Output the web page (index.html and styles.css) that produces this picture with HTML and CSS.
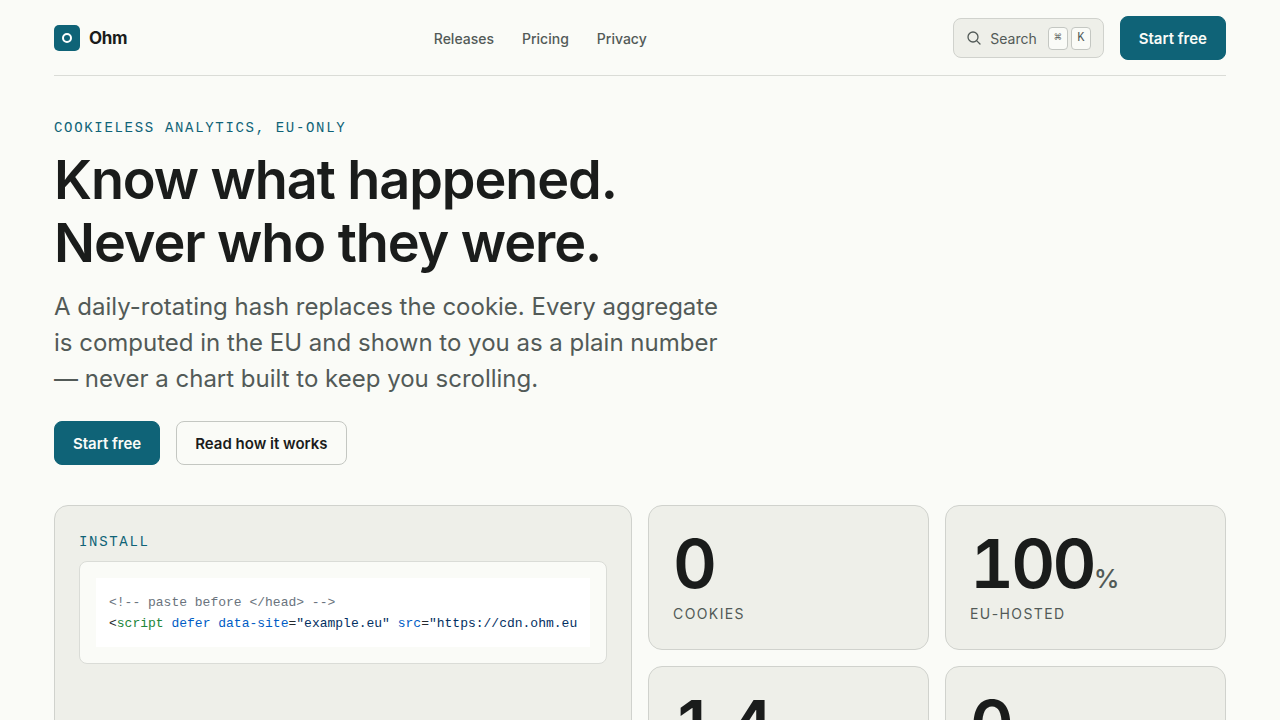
FILE: index.html
```html
<!DOCTYPE html>
<html lang="en">
<head>
    <meta charset="UTF-8">
    <meta name="viewport" content="width=device-width, initial-scale=1.0">
    <title>Ohm</title>
    <link rel="stylesheet" href="styles.css">
</head>
<body>
    <div class="page">
        <header class="topbar">
            <a class="brand" href="#">
                <svg class="brand-mark" viewBox="0 0 26 26" aria-hidden="true">
                    <rect width="26" height="26" rx="5" fill="#0f6377"/>
                    <circle cx="13" cy="13" r="4" fill="none" stroke="#fff" stroke-width="2"/>
                </svg>
                <span>Ohm</span>
            </a>

            <nav class="nav">
                <a href="#">Releases</a>
                <a href="#">Pricing</a>
                <a href="#">Privacy</a>
            </nav>

            <div class="actions">
                <button type="button" class="search">
                    <svg class="search-icon" viewBox="0 0 16 16" aria-hidden="true">
                        <circle cx="7" cy="7" r="5" fill="none" stroke="currentColor" stroke-width="1.3"/>
                        <path d="M10.6 10.6 L14 14" stroke="currentColor" stroke-width="1.3" stroke-linecap="round"/>
                    </svg>
                    <span>Search</span>
                    <span class="keys"><kbd>⌘</kbd><kbd>K</kbd></span>
                </button>
                <button type="button" class="btn btn-primary">Start free</button>
            </div>
        </header>

        <main>
            <section class="hero">
                <p class="eyebrow">Cookieless analytics, EU-only</p>
                <h1>Know what happened.<br>Never who they were.</h1>
                <p class="lead">A daily-rotating hash replaces the cookie. Every aggregate is computed in the EU and shown to you as a plain number — never a chart built to keep you scrolling.</p>
                <div class="hero-actions">
                    <button type="button" class="btn btn-primary">Start free</button>
                    <button type="button" class="btn btn-outline">Read how it works</button>
                </div>
            </section>

            <section class="bento">
                <article class="card install">
                    <p class="eyebrow">Install</p>
                    <div class="code-frame">
                        <pre><code><span class="c">&lt;!-- paste before &lt;/head&gt; --&gt;</span>
&lt;<span class="t">script</span> <span class="a">defer</span> <span class="a">data-site</span>=<span class="s">"example.eu"</span> <span class="a">src</span>=<span class="s">"https://cdn.ohm.eu</span></code></pre>
                    </div>
                </article>
                <article class="card">
                    <p class="stat">0</p>
                    <p class="label">Cookies</p>
                </article>
                <article class="card">
                    <p class="stat">100<span class="unit">%</span></p>
                    <p class="label">EU-hosted</p>
                </article>
                <article class="card">
                    <p class="stat">1.4</p>
                </article>
                <article class="card">
                    <p class="stat">0</p>
                </article>
            </section>
        </main>
    </div>
</body>
</html>
```
FILE: styles.css
```css
* {
    box-sizing: border-box;
}
body {
    margin: 0;
    background: #fafbf7;
    color: #1a1c1b;
    font-family: Inter, sans-serif;
    font-size: 14px;
}
p, h1, pre {
    margin: 0;
}
a {
    color: inherit;
    text-decoration: none;
}
button {
    font-family: inherit;
    cursor: pointer;
}
.page {
    padding: 0 54px 64px;
}

/* top bar */
.topbar {
    display: flex;
    align-items: center;
    justify-content: space-between;
    padding: 16px 0 15px;
    border-bottom: 1px solid #dadcd7;
}
.brand {
    display: flex;
    align-items: center;
    gap: 9px;
    font-size: 17px;
    font-weight: 700;
    letter-spacing: -0.02em;
}
.brand-mark {
    width: 26px;
    height: 26px;
}
.nav {
    display: flex;
    gap: 28px;
    color: #525a57;
    font-weight: 500;
}
.actions {
    display: flex;
    align-items: center;
    gap: 16px;
}
.search {
    display: flex;
    align-items: center;
    gap: 8px;
    height: 40px;
    padding: 0 12px;
    border: 1px solid #d0d2cd;
    border-radius: 8px;
    background: #eeefe9;
    color: #525a57;
    font-size: 14px;
}
.search-icon {
    width: 16px;
    height: 16px;
}
.keys {
    display: flex;
    gap: 3px;
    margin-left: 3px;
}
kbd {
    width: 20px;
    height: 23px;
    border: 1px solid #c4c7c2;
    border-radius: 4px;
    background: #fafbf7;
    font-family: "Liberation Mono", monospace;
    font-size: 12px;
    line-height: 21px;
    text-align: center;
}
.btn {
    height: 44px;
    padding: 0 18px;
    border: 1px solid transparent;
    border-radius: 8px;
    font-size: 15px;
    font-weight: 600;
}
.btn-primary {
    background: #0f6377;
    border-color: #0f6377;
    color: #fafbf7;
}
.btn-outline {
    background: #fafbf7;
    border-color: #c4c7c2;
    color: #1a1c1b;
}

/* hero */
.hero {
    padding: 40px 0;
}
.eyebrow {
    color: #0f6377;
    font-family: "Liberation Mono", monospace;
    font-size: 14px;
    line-height: 24px;
    letter-spacing: 0.12em;
    text-transform: uppercase;
}
h1 {
    margin-top: 8px;
    font-size: 54px;
    font-weight: 600;
    line-height: 63px;
    letter-spacing: -0.02em;
}
.lead {
    max-width: 680px;
    margin-top: 15px;
    color: #525a57;
    font-size: 24px;
    line-height: 36px;
}
.hero-actions {
    display: flex;
    gap: 16px;
    margin-top: 24px;
}

/* cards */
.bento {
    display: grid;
    grid-template-columns: repeat(4, minmax(0, 1fr));
    gap: 16px;
}
.card {
    min-height: 145px;
    padding: 24px;
    border: 1px solid #d0d2cd;
    border-radius: 14px;
    background: #eeefe9;
}
.install {
    grid-column: span 2;
    grid-row: span 2;
}
.code-frame {
    margin-top: 7px;
    padding: 16px;
    border: 1px solid #dadcd7;
    border-radius: 8px;
    background: #fafbf7;
}
pre {
    padding: 14px 13px 13px;
    overflow: hidden;
    background: #fff;
    color: #24292e;
    font-family: "Liberation Mono", monospace;
    font-size: 13px;
    line-height: 21px;
}
code {
    font-family: inherit;
}
.c { color: #6a737d; }
.t { color: #22863a; }
.a { color: #005cc5; }
.s { color: #032f62; }
.stat {
    font-size: 68px;
    font-weight: 600;
    font-variant-numeric: tabular-nums;
    line-height: 66px;
    letter-spacing: -0.04em;
}
.unit {
    color: #525a57;
    font-size: 26px;
    font-weight: 500;
    line-height: 1;
}
.label {
    margin-top: 7px;
    color: #525a57;
    font-size: 14px;
    line-height: 22px;
    letter-spacing: 0.1em;
    text-transform: uppercase;
}
```
